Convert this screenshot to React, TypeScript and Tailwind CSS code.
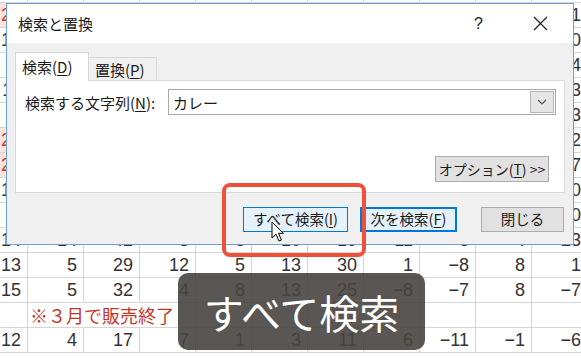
import React from 'react';

type Row = { cells: string[]; red?: boolean; note?: string };

// spreadsheet behind the dialog; only the lower rows and thin slivers show
const rows: Row[] = [
  { cells: ['16', '7', '28', '4', '9', '12', '22', '6', '3', '5', '24'] },
  { cells: ['23', '9', '35', '6', '11', '14', '27', '8', '2', '6', '31'], red: true },
  { cells: ['12', '6', '21', '3', '7', '9', '18', '5', '−2', '3', '10'] },
  { cells: ['', '8', '26', '5', '10', '11', '20', '7', '4', '2', '14'] },
  { cells: ['11', '5', '19', '2', '6', '8', '17', '4', '−3', '1', '13'] },
  { cells: ['', '4', '22', '3', '5', '9', '16', '2', '−5', '−1', '−3'] },
  { cells: ['24', '9', '38', '7', '12', '15', '29', '9', '5', '7', '32'], red: true },
  { cells: ['22', '8', '33', '6', '10', '13', '26', '8', '3', '6', '27'], red: true },
  { cells: ['17', '6', '27', '4', '8', '11', '21', '5', '1', '4', '20'] },
  { cells: ['', '7', '25', '4', '7', '10', '19', '6', '2', '3', '10'] },
  { cells: ['14', '14', '42', '3', '6', '10', '19', '11', '6', '4', '23'] },
  { cells: ['13', '5', '29', '12', '5', '13', '30', '1', '−8', '8', '1'] },
  { cells: ['15', '5', '32', '4', '8', '13', '25', '−8', '−7', '8', '−7'] },
  { cells: [], note: '※３月で販売終了' },
  { cells: ['12', '4', '17', '7', '1', '3', '11', '6', '−11', '−1', '−6'] },
];

const cellCls = 'w-[56px] shrink-0 h-full border-r border-[#d6d6d6] text-right pr-[6px]';

const SheetRow = ({ row }: { row: Row }) => {
  if (row.note) {
    return (
      <div className="flex h-[25px] border-b border-[#d6d6d6]">
        <div className={cellCls} />
        <div className="w-[168px] shrink-0 h-full border-r border-[#d6d6d6] bg-white pl-[2px] text-[#c0392b] font-['Noto_Sans_CJK_JP',sans-serif] text-[18px] leading-[24px] whitespace-nowrap">
          {row.note}
        </div>
        {Array.from({ length: 7 }).map((_, i) => (
          <div key={i} className={cellCls} />
        ))}
      </div>
    );
  }
  return (
    <div className="flex h-[25px] border-b border-[#d6d6d6] text-[18px] leading-[24px] text-[#333]">
      {row.cells.map((c, i) => (
        <div
          key={i}
          className={`${cellCls} ${i === 0 && row.red ? 'bg-[#fbe3df] text-[#cc3b2b]' : ''}`}
        >
          {c}
        </div>
      ))}
    </div>
  );
};

const U = ({ children }: { children: React.ReactNode }) => (
  <span className="underline underline-offset-2">{children}</span>
);

const Cursor = () => (
  <svg width="14" height="22" viewBox="0 0 14 22" className="absolute left-[271px] top-[221px]">
    <path
      d="M1 1 L1 17 L5 13.2 L8 20 L10.4 19 L7.5 12.3 L12.5 12.3 Z"
      fill="#fff"
      stroke="#000"
      strokeWidth="1"
      strokeLinejoin="round"
    />
  </svg>
);

const Dialog = () => (
  <div className="absolute left-[6px] top-[3px] w-[568px] h-[242px] border border-[#6f9fd6] bg-[#f0f0f0] flex flex-col font-['Noto_Sans_CJK_JP',sans-serif] text-[#1a1a1a]">
    {/* title bar */}
    <div className="h-[39px] bg-white flex items-center pl-[11px] pr-[25px]">
      <div className="flex-1 text-[15px] leading-none">検索と置換</div>
      <div className="text-[16px] leading-none text-[#222] mr-[50px] font-['Liberation_Sans',sans-serif]">?</div>
      <svg width="15" height="15" viewBox="0 0 15 15">
        <path d="M1 1 L14 14 M14 1 L1 14" stroke="#222" strokeWidth="1.3" fill="none" />
      </svg>
    </div>

    {/* body */}
    <div className="flex-1 px-[8px] pt-[9px] flex flex-col">
      <div className="flex items-end h-[28px]">
        <div className="relative top-px z-10 w-[74px] h-[29px] bg-white border border-b-0 border-[#d9d9d9] pl-[6px] text-[15px] leading-[28px] whitespace-nowrap">
          検索(<U>D</U>)
        </div>
        <div className="w-[68px] h-[23px] border border-l-0 border-b-0 border-[#d9d9d9] bg-[#f0f0f0] pl-[6px] text-[15px] leading-[23px] whitespace-nowrap">
          置換(<U>P</U>)
        </div>
      </div>

      <div className="h-[113px] bg-white border border-[#d9d9d9] pl-[9px] pr-[8px] pt-[8px] flex flex-col">
        <div className="flex items-center h-[26px]">
          <div className="w-[143px] shrink-0 text-[15px] leading-none whitespace-nowrap">
            検索する文字列(<U>N</U>):
          </div>
          <div className="flex-1 h-[26px] border border-[#a9a9a9] bg-white flex items-center pl-[4px] pr-[1px]">
            <div className="flex-1 text-[15px] leading-none">カレー</div>
            <div className="w-[24px] h-[22px] bg-[#e6e6e6] border border-[#b5b5b5] flex items-center justify-center">
              <svg width="10" height="6" viewBox="0 0 10 6">
                <path d="M1 1 L5 5 L9 1" stroke="#555" strokeWidth="1.2" fill="none" />
              </svg>
            </div>
          </div>
        </div>
        <div className="flex justify-end mt-[41px] pr-[7px]">
          <div className="w-[114px] h-[26px] bg-[#e1e1e1] border border-[#adadad] flex items-center justify-center text-[14px] leading-none whitespace-nowrap">
            オプション(<U>T</U>)&nbsp;&gt;&gt;
          </div>
        </div>
      </div>

      <div className="flex justify-end mt-[14px] pr-[1px]">
        <div className="w-[105px] h-[25px] bg-[#e5f1fb] border border-[#0078d7] flex items-center justify-center text-[14.5px] leading-none whitespace-nowrap">
          すべて検索(<U>I</U>)
        </div>
        <div className="w-[97px] h-[25px] ml-[12px] bg-[#e5f1fb] border-2 border-[#0078d7] flex items-center justify-center text-[14.5px] leading-none whitespace-nowrap">
          次を検索(<U>F</U>)
        </div>
        <div className="w-[83px] h-[25px] ml-[24px] bg-[#e1e1e1] border border-[#adadad] flex items-center justify-center text-[14.5px] leading-none">
          閉じる
        </div>
      </div>
    </div>
  </div>
);

export default function App() {
  return (
    <div className="relative w-[581px] h-[358px] overflow-hidden bg-white font-['Liberation_Sans',sans-serif]">
      <div className="-ml-[28px] -mt-[22px] w-[616px]">
        {rows.map((r, i) => (
          <SheetRow key={i} row={r} />
        ))}
      </div>

      <Dialog />

      {/* red highlight around the button */}
      <div className="absolute left-[222px] top-[183px] w-[144px] h-[74px] border-[4px] border-[#ee5039] rounded-[8px]" />

      <Cursor />

      {/* caption */}
      <div className="absolute left-[178px] top-[273px] w-[247px] h-[77px] rounded-[10px] bg-[rgba(72,68,64,0.9)] flex items-center justify-center text-white text-[40px] leading-none font-['Noto_Sans_CJK_JP',sans-serif]">
        すべて検索
      </div>
    </div>
  );
}
